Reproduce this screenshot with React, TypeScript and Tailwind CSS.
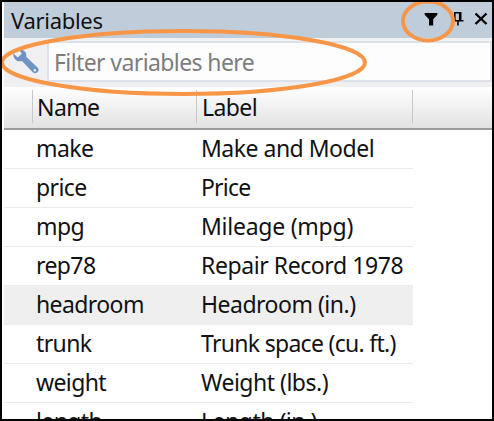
import React from "react";

const variables = [
  { name: "make", label: "Make and Model" },
  { name: "price", label: "Price", tracking: "tracking-[-0.8px]" },
  { name: "mpg", label: "Mileage (mpg)", tracking: "tracking-[-0.25px]" },
  { name: "rep78", label: "Repair Record 1978", tracking: "tracking-[-0.42px]" },
  { name: "headroom", label: "Headroom (in.)", selected: true },
  { name: "trunk", label: "Trunk space (cu. ft.)", tracking: "tracking-[-0.7px]" },
  { name: "weight", label: "Weight (lbs.)" },
  { name: "length", label: "Length (in.)", tracking: "tracking-[-0.5px]" },
];

function TitleBar() {
  return (
    <header className="flex h-9 shrink-0 items-center bg-[#bfccda] pl-[7px] pr-[3px]">
      <h1 className="flex-1 text-[22px] leading-9 tracking-[-0.3px]">Variables</h1>
      <svg className="mr-3.5 h-4 w-3.5" viewBox="0 0 14 16" aria-label="Filter">
        <path d="M.7 1h12.6v1.8L9.2 7.3v6.2H5V7.3L.7 2.8z" />
      </svg>
      <svg className="mr-[9px] h-4 w-3" viewBox="0 0 12 16" fill="none" stroke="black" strokeWidth="1.6" aria-label="Pin">
        <path d="M2.8 8.5V.8h6M.5 8.7h11M6 8.7v4.8" />
        <path d="M8.2 0v8.7" strokeWidth="2.6" />
      </svg>
      <svg className="h-4 w-4" viewBox="0 0 16 16" fill="none" stroke="black" strokeWidth="2.4" aria-label="Close">
        <path d="m2.5 1.5 11 10.5M13.5 1.5l-11 10.5" />
      </svg>
    </header>
  );
}

function FilterBar() {
  return (
    <div className="flex h-[49px] shrink-0 bg-[#f0f0f2] pb-[5px] pt-[3px]">
      <div className="flex w-[43px] items-center pl-2">
        <svg className="h-7 w-7" viewBox="0 0 28 28" aria-label="Filter options">
          <path
            fill="#6f94c4"
            d="M7 1.5C11 .7 15.4 4.4 14.2 8.8L25.8 19.8c2.6 2.8-1.6 7.2-4.8 4.6L10 13C6 14.5.8 11.2 1.4 5.5L5.8 9.4 9.8 5.8zM22.8 21a1.3 1.3 0 1 0 .1 2.6 1.3 1.3 0 0 0-.1-2.6z"
          />
        </svg>
      </div>
      <input
        className="min-w-0 flex-1 border-2 border-[#dde1ea] bg-[#fdfdfd] pl-[5px] pt-0.5 text-[23px] tracking-[-0.6px] outline-none placeholder:text-[#7d7d7d] placeholder:opacity-100"
        placeholder="Filter variables here"
      />
    </div>
  );
}

function ColumnHeader() {
  return (
    <div className="flex h-[43px] shrink-0 border-b-2 border-[#9c9c9c] bg-linear-to-b from-white to-[#e2e2e2] pb-[5px] pt-[3px] text-[23px] leading-[33px] tracking-[-0.6px]">
      <div className="w-[29px] border-r border-[#c9c9c9]" />
      <div className="w-[164px] border-r border-[#c9c9c9] pl-[4px] pt-px">Name</div>
      <div className="w-[216px] border-r border-[#c9c9c9] pl-[5px] pt-px">Label</div>
    </div>
  );
}

export default function App() {
  return (
    <main className="relative flex h-[421px] w-[494px] flex-col overflow-hidden border-2 border-black bg-white pl-0.5 font-['Noto_Sans',sans-serif] text-[#111]">
      <TitleBar />
      <FilterBar />
      <ColumnHeader />
      <div className="min-h-0 w-[409px] flex-1 overflow-hidden">
        {variables.map((v) => (
          <div
            key={v.name}
            className={`flex h-[39px] border-b border-[#ebebeb] pl-8 text-[23px] leading-[36px] ${v.selected ? "bg-[#efefef]" : ""}`}
          >
            <span className="w-[165px] tracking-[-0.6px]">{v.name}</span>
            <span className={`whitespace-nowrap ${v.tracking ?? "tracking-[-0.5px]"}`}>{v.label}</span>
          </div>
        ))}
      </div>
      <svg className="pointer-events-none absolute -left-0.5 -top-0.5 h-[421px] w-[494px]" viewBox="0 0 494 421" fill="none" stroke="#f79646">
        <ellipse cx="183.5" cy="62.5" rx="181.5" ry="31.5" strokeWidth="4" />
        <ellipse cx="428" cy="21" rx="25" ry="19.5" strokeWidth="4" />
      </svg>
    </main>
  );
}
